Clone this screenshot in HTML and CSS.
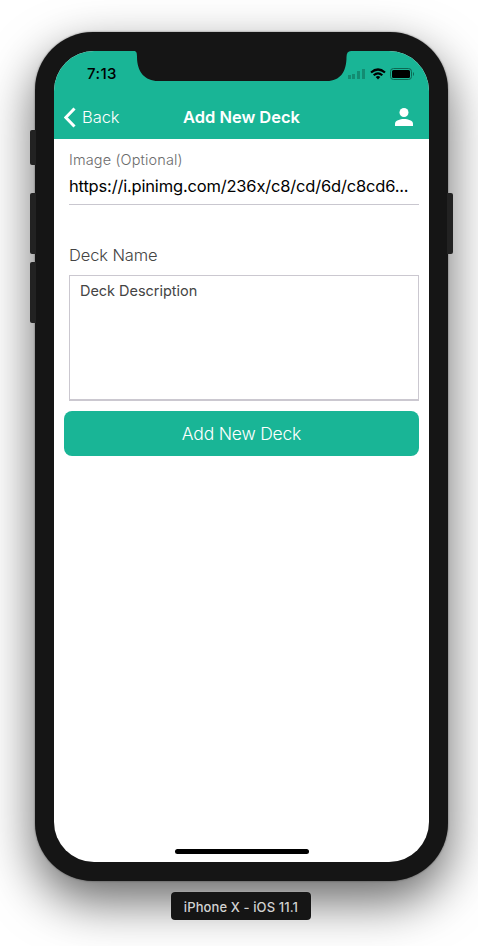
FILE: index.html
```html
<!DOCTYPE html>
<html lang="en">
<head>
<meta charset="utf-8">
<title>Add New Deck</title>
<link rel="stylesheet" href="styles.css">
</head>
<body>
<div class="phone">
  <i class="key mute"></i><i class="key vol-up"></i><i class="key vol-down"></i><i class="key power"></i>
  <div class="screen">
    <svg class="notch" width="217" height="30" viewBox="0 0 217 30"><path d="M0 0C2.500 0 3 2 3 6C3 21 11 30 24 30H193C206 30 212.500 21 212.500 6C212.500 2 214 0 217 0Z" fill="#151515"/></svg>
    <header>
      <div class="status">
        <span class="time">7:13</span>
        <div class="indicators">
          <svg width="17" height="10" viewBox="0 0 17 10" fill="#138c72"><path d="M0 6h3v4H0zM4 5h3v5H4zM9 2h3v8H9zM14 0h3v10h-3z"/></svg>
          <svg class="wifi" width="16" height="12" viewBox="0 0 16 12" fill="none" stroke="#000" stroke-width="2.200"><path d="M1 4.500Q8-1.500 15 4.500M3.700 7.200Q8 3.400 12.300 7.200"/><path d="M5.700 9Q8 7 10.300 9L8 11.500Z" fill="#000" stroke="none"/></svg>
          <svg class="battery" width="24" height="12" viewBox="0 0 24 12"><rect x=".5" y=".5" width="21" height="11" rx="3" fill="none" stroke="#0d6752"/><rect x="2" y="2" width="18" height="8" rx="1.500"/><path d="M23 4v4q1-.5 1-2t-1-2" fill="#0d6752"/></svg>
        </div>
      </div>
      <nav>
        <div class="back"><svg width="12" height="21" viewBox="0 0 12 21"><path d="M10.500 1.500L1.800 10.500L10.500 19.500" fill="none" stroke="#fff" stroke-width="3"/></svg><span>Back</span></div>
        <h1><span>Add New Deck</span></h1>
        <svg class="user" width="18" height="18" viewBox="0 0 18 18" fill="#fff"><circle cx="9" cy="4.500" r="4.500"/><path d="M0 18v-2.500C0 12.500 5 11 9 11s9 1.500 9 4.500V18z"/></svg>
      </nav>
    </header>
    <main>
      <div class="field">
        <div class="label"><span>Image (Optional)</span></div>
        <div class="url"><span>https://i.pinimg.com/236x/c8/cd/6d/c8cd6...</span></div>
      </div>
      <div class="name"><span>Deck Name</span></div>
      <div class="description"><span>Deck Description</span></div>
      <div class="submit"><span>Add New Deck</span></div>
    </main>
    <div class="home"></div>
  </div>
</div>
<div class="caption"><span>iPhone X - iOS 11.1</span></div>
</body>
</html>
```
FILE: styles.css
```css
* { box-sizing: border-box; }
body {
  margin: 0;
  height: 946px;
  padding: 32px 0 0 35px;
  overflow: hidden;
  background: #fff;
  font-family: Inter, "Liberation Sans", sans-serif;
  white-space: nowrap;
}
.phone {
  position: relative;
  width: 413px;
  height: 849px;
  padding: 19px;
  border-radius: 58px;
  background: #151515;
  box-shadow: 0 20px 50px rgba(0,0,0,.6), 0 0 2px rgba(0,0,0,.5);
}
.key {
  position: absolute;
  left: -5px;
  width: 6px;
  height: 61px;
  border-radius: 2px 0 0 2px;
  background: #222;
}
.mute { top: 98px; height: 35px; }
.vol-up { top: 161px; }
.vol-down { top: 230px; }
.power { left: auto; right: -5px; top: 161px; border-radius: 0 2px 2px 0; }
.screen {
  position: relative;
  display: flex;
  flex-direction: column;
  width: 375px;
  height: 811px;
  border-radius: 40px;
  overflow: hidden;
  background: #fff;
}
.notch { position: absolute; left: 80px; top: 0; }
header { height: 88px; background: #19b596; }
.status {
  display: flex;
  justify-content: space-between;
  height: 44px;
  padding: 14px 15px 0 33px;
}
.time { font-size: 15px; font-weight: 550; line-height: 18px; letter-spacing: .4px; }
.indicators { display: flex; align-items: flex-start; padding-top: 4px; }
.wifi { margin: -1px 4px 0 5px; }
.battery { margin-top: -1px; }
nav {
  display: grid;
  grid-template-columns: 1fr auto 1fr;
  align-items: center;
  height: 44px;
  padding: 0 10px;
  color: #fff;
  font-size: 16.5px;
}
.back { display: flex; align-items: center; gap: 6px; font-weight: 300; letter-spacing: -.05px; }
h1 { margin: 0; font-size: 16.5px; font-weight: 600; letter-spacing: -.03px; }
.user { justify-self: end; margin-right: 6px; }
main { flex: 1; padding: 0 10px; }
.field { height: 66px; margin-left: 5px; padding-top: 11px; border-bottom: 1px solid #c9c7cf; }
.label { font-size: 14.5px; line-height: 20px; color: #6c6c6c; font-weight: 350; letter-spacing: .13px; }
.url { margin-top: 4px; font-size: 16.5px; line-height: 24px; letter-spacing: -.18px; color: #000; }
.name { margin: 38px 0 0 5px; font-size: 16.5px; line-height: 24px; font-weight: 350; letter-spacing: -.12px; color: #444; }
.description {
  height: 126px;
  margin: 8px 0 10px 5px;
  padding: 5px 10px;
  border: 1px solid #cbc8d0;
  border-bottom-width: 2px;
  font-size: 14.5px;
  line-height: 20px;
  letter-spacing: -.03px;
  color: #444;
}
.submit {
  height: 45px;
  border-radius: 8px;
  background: #19b596;
  color: #fff;
  font-size: 17.5px;
  font-weight: 300;
  line-height: 45px;
  letter-spacing: -.2px;
  text-align: center;
}
.home { align-self: center; width: 134px; height: 5px; margin: 0 0 8px 1px; border-radius: 3px; background: #000; }
.caption {
  width: 140px;
  height: 28px;
  position: relative;
  margin: 11px 0 0 136px;
  border-radius: 4px;
  background: #151515;
  box-shadow: 0 0 1px rgba(255,255,255,.6);
  color: #d2d2d2;
  font-size: 13px;
  font-weight: 500;
  line-height: 31px;
  letter-spacing: .1px;
  text-align: center;
}
```
